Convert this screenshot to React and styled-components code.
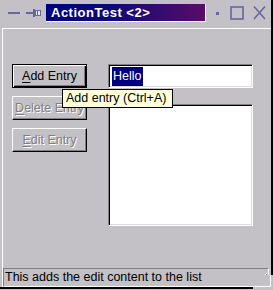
import styled, { createGlobalStyle } from 'styled-components';

const GlobalStyle = createGlobalStyle`
  html, body {
    margin: 0;
    padding: 0;
    background: #c3c1c5;
  }
  body {
    font-family: "Liberation Sans", Arial, sans-serif;
  }
`;

const Window = styled.div`
  position: relative;
  box-sizing: border-box;
  width: 273px;
  height: 289px;
  background: #c3c1c5;
  border-right: 2px solid #000;
  border-bottom: 2px solid #000;
  padding-left: 2px;
  display: flex;
  flex-direction: column;
`;

const TitleBar = styled.div`
  height: 28px;
  display: flex;
  align-items: flex-start;
  padding-top: 4px;
  box-sizing: border-box;
`;

const TitleBox = styled.div`
  flex: none;
  box-sizing: border-box;
  width: 160px;
  height: 18px;
  margin-left: 5px;
  background: linear-gradient(to right, #000080 0%, #0c0a78 40%, #5a0c68 100%);
  border-right: 1px solid #fff;
  border-bottom: 1px solid #fff;
  color: #fff;
  font-weight: bold;
  font-size: 13px;
  letter-spacing: 0.5px;
  line-height: 17px;
  padding-left: 5px;
  white-space: nowrap;
`;

const Icon = styled.svg`
  display: block;
  flex: none;
  margin-left: ${(p) => p.$ml || 0}px;
`;

const Client = styled.div`
  flex: 1;
  display: flex;
  flex-direction: column;
  border-top: 1px solid #fff;
  border-left: 1px solid #fff;
  padding-top: 35px;
`;

const Main = styled.div`
  display: flex;
  gap: 21px;
  padding-left: 9px;
`;

const ButtonColumn = styled.div`
  display: flex;
  flex-direction: column;
  gap: 8px;
  width: 75px;
`;

const Button = styled.div`
  box-sizing: border-box;
  height: 24px;
  display: flex;
  align-items: center;
  justify-content: center;
  font-size: 12.5px;
  color: ${(p) => (p.$disabled ? '#808080' : '#000')};
  text-shadow: ${(p) => (p.$disabled ? '1px 1px 0 #fff' : 'none')};
  background: #c3c1c5;
  border: 1px solid;
  border-color: ${(p) => (p.$default ? '#000' : '#fff #000 #000 #fff')};
  box-shadow: ${(p) =>
    p.$default
      ? 'inset 1px 1px 0 #fff, inset -1px -1px 0 #000, inset -2px -2px 0 #808080'
      : 'inset -1px -1px 0 #808080'};
  white-space: nowrap;
  u {
    text-decoration: underline;
    text-underline-offset: 2px;
  }
`;

const RightColumn = styled.div`
  width: 145px;
  display: flex;
  flex-direction: column;
  gap: 16px;
`;

const Sunken = styled.div`
  box-sizing: border-box;
  background: #fff;
  border: 1px solid;
  border-color: #808080 #fff #fff #808080;
  box-shadow: inset 1px 1px 0 #000, inset -1px -1px 0 #dcdcdc;
`;

const LineEdit = styled(Sunken)`
  height: 24px;
  padding: 2px 3px;
  font-size: 12.5px;
  line-height: 19px;
`;

const Selected = styled.span`
  display: inline-block;
  background: #000080;
  color: #fff;
  padding: 0 1px;
`;

const ListBox = styled(Sunken)`
  height: 122px;
`;

const Spacer = styled.div`
  flex: 1;
`;

const StatusBar = styled.div`
  position: relative;
  box-sizing: border-box;
  height: 19px;
  margin: 0 2px 0 0;
  border: 1px solid;
  border-color: #808080 #fff #fff #808080;
  font-size: 12.5px;
  line-height: 16px;
  padding-left: 1px;
  white-space: nowrap;
`;

const Grip = styled.svg`
  position: absolute;
  right: 0;
  bottom: 0;
`;

const CornerGrip = styled.div`
  position: absolute;
  right: -2px;
  bottom: -2px;
  box-sizing: border-box;
  width: 20px;
  height: 14px;
  padding: 0 2px 2px 0;
  background: #c3c1c5;
  div {
    height: 100%;
    box-sizing: border-box;
    border-right: 1px solid #fff;
    border-bottom: 1px solid #fff;
  }
`;

const Tooltip = styled.div`
  position: absolute;
  left: 62px;
  top: 89px;
  box-sizing: border-box;
  width: 111px;
  height: 19px;
  background: #ffffdc;
  border: 1px solid #000;
  font-size: 12.5px;
  line-height: 17px;
  padding-left: 3px;
  white-space: nowrap;
`;

const iconColor = '#6666a0';

export default function App() {
  return (
    <>
      <GlobalStyle />
      <Window>
        <TitleBar>
          <Icon width="12" height="18" $ml={6} viewBox="0 0 12 18">
            <rect x="0" y="8" width="12" height="2" fill={iconColor} />
          </Icon>
          <Icon width="15" height="18" $ml={6} viewBox="0 0 15 18">
            <rect x="0" y="8" width="8" height="2" fill={iconColor} />
            <rect x="7" y="5" width="2" height="8" fill={iconColor} />
            <rect x="9.5" y="6.5" width="5" height="5" fill="#e8e8f0" stroke={iconColor} strokeWidth="1" />
            <rect x="11" y="7" width="1" height="5" fill={iconColor} />
          </Icon>
          <TitleBox>ActionTest &lt;2&gt;</TitleBox>
          <Icon width="3" height="18" $ml={10} viewBox="0 0 3 18">
            <rect x="0" y="8" width="3" height="3" fill={iconColor} />
          </Icon>
          <Icon width="14" height="18" $ml={11} viewBox="0 0 14 18">
            <rect x="1" y="3" width="12" height="12" fill="none" stroke={iconColor} strokeWidth="1.6" />
          </Icon>
          <Icon width="13" height="18" $ml={9} viewBox="0 0 13 18">
            <path d="M1 2.5 L12 15 M12 2.5 L1 15" stroke={iconColor} strokeWidth="1.6" />
          </Icon>
        </TitleBar>
        <Client>
          <Main>
            <ButtonColumn>
              <Button $default>
                <span><u>A</u>dd Entry</span>
              </Button>
              <Button $disabled>
                <span><u>D</u>elete Entry</span>
              </Button>
              <Button $disabled>
                <span><u>E</u>dit Entry</span>
              </Button>
            </ButtonColumn>
            <RightColumn>
              <LineEdit>
                <Selected>Hello</Selected>
              </LineEdit>
              <ListBox />
            </RightColumn>
          </Main>
          <Spacer />
          <StatusBar>
            This adds the edit content to the list
            <Grip width="15" height="15" viewBox="0 0 15 15">
              <path d="M14 2 L2 14 M14 6 L6 14 M14 10 L10 14" stroke="#fff" strokeWidth="1" />
              <path d="M14 3 L3 14 M14 4 L4 14 M14 7 L7 14 M14 8 L8 14 M14 11 L11 14 M14 12 L12 14" stroke="#808080" strokeWidth="1" />
            </Grip>
          </StatusBar>
        </Client>
        <CornerGrip>
          <div />
        </CornerGrip>
        <Tooltip>Add entry (Ctrl+A)</Tooltip>
      </Window>
    </>
  );
}
